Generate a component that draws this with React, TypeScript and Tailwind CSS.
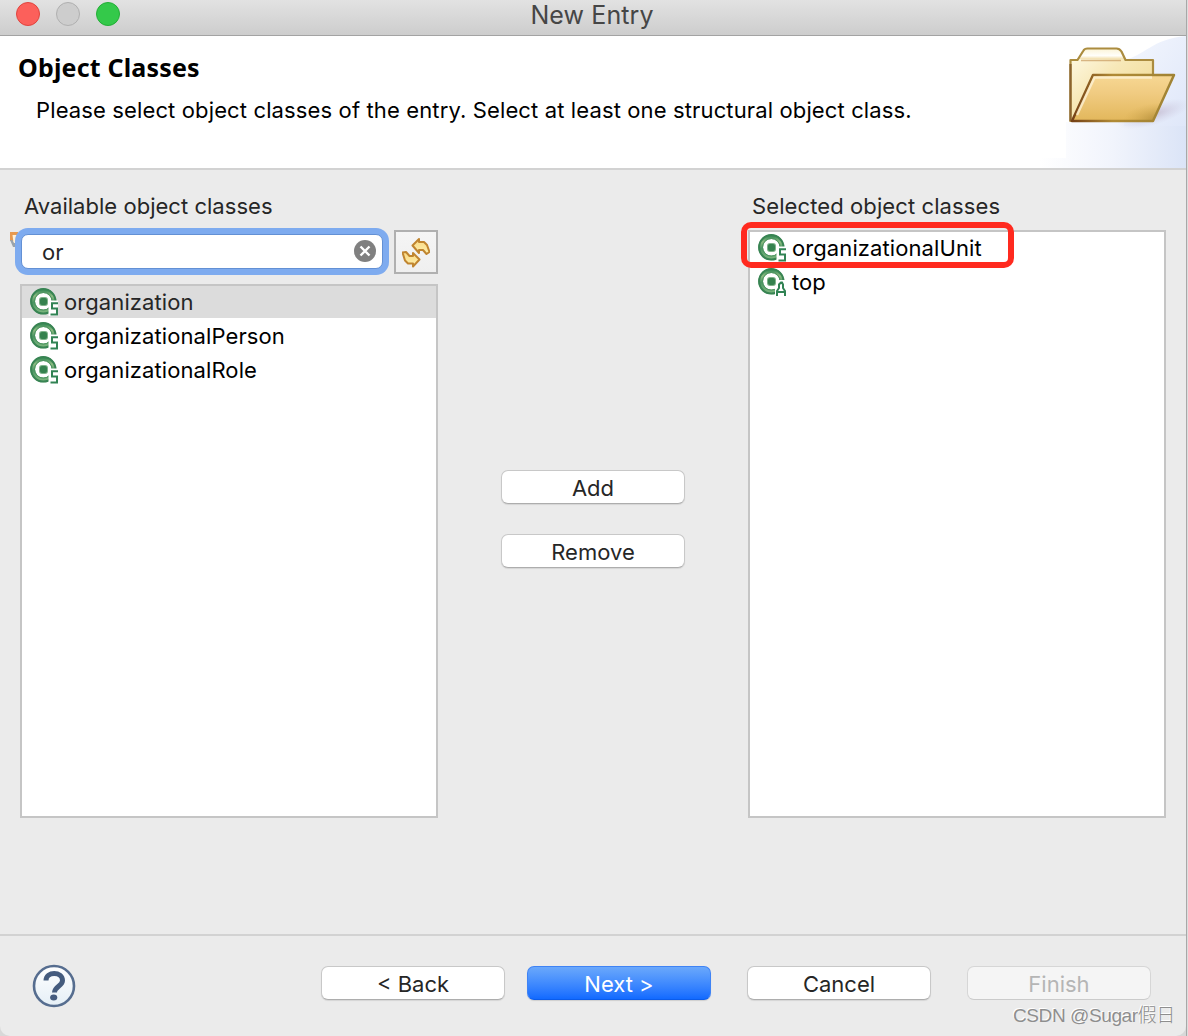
import type { ReactNode } from 'react';
import clsx from 'clsx';

type Kind = 'S' | 'A';

interface ObjectClass {
  name: string;
  kind: Kind;
}

const available: ObjectClass[] = [
  { name: 'organization', kind: 'S' },
  { name: 'organizationalPerson', kind: 'S' },
  { name: 'organizationalRole', kind: 'S' },
];

const selected: ObjectClass[] = [
  { name: 'organizationalUnit', kind: 'S' },
  { name: 'top', kind: 'A' },
];

function ClassIcon({ kind }: { kind: Kind }) {
  return (
    <svg width="28" height="28" viewBox="0 0 28 28" className="shrink-0">
      <defs>
        <linearGradient id="ring" x1="0" y1="0" x2="0" y2="1">
          <stop offset="0" stopColor="#3f8f5a" />
          <stop offset="0.25" stopColor="#8fbd82" />
          <stop offset="0.55" stopColor="#4b9562" />
          <stop offset="1" stopColor="#79b47c" />
        </linearGradient>
      </defs>
      <circle cx="13.300" cy="13.300" r="10.600" fill="#fff" stroke="url(#ring)" strokeWidth="4.600" />
      <circle cx="13.300" cy="13.300" r="12.200" fill="none" stroke="#388453" strokeWidth="2" />
      <circle cx="13.300" cy="13.300" r="8.800" fill="none" stroke="#4b9360" strokeWidth="1" />
      <rect x="9" y="9" width="9" height="9" rx="3" fill="#7fb38a" />
      <rect x="10" y="10" width="7" height="7" rx="2" fill="#35824e" />
      {kind === 'S' ? (
        <>
          <path d="M18.500 12.500H28V28h-9.500z" fill="#fff" />
          <path d="M28 15.200h-6v5.300h5v6h-6.500" fill="none" stroke="#318354" strokeWidth="2" />
        </>
      ) : (
        <>
          <path d="M20 12h8v16H17v-8z" fill="#fff" />
          <path
            d="M19 28v-5l2-3v-3.500l2-2h1l1 2V20l2 3v5M20 24h6"
            fill="none"
            stroke="#318354"
            strokeWidth="2"
          />
        </>
      )}
    </svg>
  );
}

function FolderArt() {
  return (
    <svg width="146" height="132" viewBox="0 0 146 132">
      <defs>
        <linearGradient id="haze" x1="0" x2="1">
          <stop offset="0" stopColor="#fff" />
          <stop offset="0.5" stopColor="#f1f4fc" />
          <stop offset="1" stopColor="#dbe4f7" />
        </linearGradient>
        <linearGradient id="beam" x1="0" x2="1" y1="0" y2="1">
          <stop offset="0" stopColor="#f4f7fe" />
          <stop offset="1" stopColor="#dfe7f9" />
        </linearGradient>
        <linearGradient id="back" x1="0" x2="1" y1="0" y2="1">
          <stop offset="0" stopColor="#fffbe8" />
          <stop offset="0.4" stopColor="#f7e8b8" />
          <stop offset="1" stopColor="#eed68a" />
        </linearGradient>
        <linearGradient id="tab" x1="0" x2="0" y1="0" y2="1">
          <stop offset="0" stopColor="#fbf3d3" />
          <stop offset="0.7" stopColor="#fffefa" />
          <stop offset="1" stopColor="#f2dfab" />
        </linearGradient>
        <linearGradient id="front" x1="0" x2="0" y1="0" y2="1">
          <stop offset="0" stopColor="#f7d894" />
          <stop offset="0.4" stopColor="#f0cb81" />
          <stop offset="1" stopColor="#e2b75b" />
        </linearGradient>
        <linearGradient id="edge" x1="0" x2="1">
          <stop offset="0" stopColor="#754116" />
          <stop offset="0.4" stopColor="#b08a35" />
          <stop offset="1" stopColor="#a08334" />
        </linearGradient>
        <radialGradient id="corner" cx="0.9" cy="1" r="0.4">
          <stop offset="0" stopColor="#8f6f24" stopOpacity="0.75" />
          <stop offset="1" stopColor="#c89f44" stopOpacity="0" />
        </radialGradient>
        <radialGradient id="shade">
          <stop offset="0" stopColor="#b5a5bd" stopOpacity="0.6" />
          <stop offset="1" stopColor="#c8c4dd" stopOpacity="0" />
        </radialGradient>
      </defs>
      <path d="M26 86H146V132H0V122H26z" fill="url(#haze)" />
      <path d="M84 24C104 20 112 3 146 0V90H84z" fill="url(#beam)" />
      <ellipse cx="114" cy="78" rx="38" ry="11" fill="url(#shade)" transform="rotate(-17 114 78)" />
      <path d="M30.500 86V24h7l6-10q1-2 4-2h29q3 0 5 3l4 9h28v62z" fill="url(#back)" />
      <path d="M37.500 23l6-9q1-2 4-2h29q3 0 5 3l4 8z" fill="url(#tab)" />
      <path
        d="M30.500 86V24h7l6-9.500q1-2 4-2h29q3 0 5 3l4 8.500h27.500v17"
        fill="none"
        stroke="#ab8c3f"
        strokeWidth="2.200"
        strokeLinejoin="round"
      />
      <path d="M41 24.500h40" stroke="#c99c61" strokeWidth="1.500" opacity="0.7" />
      <path d="M30.500 28v57" stroke="#8b632f" strokeWidth="2.200" />
      <path d="M32 85L53 39H134L113 85z" fill="url(#front)" />
      <path d="M32 85L53 39H134L113 85z" fill="url(#corner)" stroke="url(#edge)" strokeWidth="2.500" strokeLinejoin="round" />
      <path d="M37 79L54.500 41.500H112" fill="none" stroke="#fff6df" strokeWidth="2.500" opacity="0.7" />
    </svg>
  );
}

function RefreshArrows() {
  return (
    <svg width="28" height="31" viewBox="0 0 28 31" fill="url(#gold)" stroke="#c08530" strokeWidth="2" strokeLinejoin="round">
      <defs>
        <linearGradient id="gold" x1="0" x2="0" y1="0" y2="1">
          <stop offset="0" stopColor="#fbd983" />
          <stop offset="1" stopColor="#fdf0ae" />
        </linearGradient>
      </defs>
      <path d="M10.500 8.500L17 2v3h5l3 3 2.500 7-3 2-3.500-4h-4v3z" />
      <path d="M17.500 22.500L11 29.500v-3H6l-3-3-2.500-8 3.500-.5 3.500 4H11v-3z" />
    </svg>
  );
}

function ClassList({ items, className, active }: { items: ObjectClass[]; className?: string; active?: string }) {
  return (
    <ul className={clsx('w-[418px] border-2 border-[#c5c5c5] bg-white', className)}>
      {items.map((item) => (
        <li
          key={item.name}
          className={clsx(
            'mb-0.5 flex h-8 items-center gap-1.5 pl-2 tracking-[0.09px]',
            item.name === active ? 'bg-[#dcdcdc] text-[#262626]' : 'text-black',
          )}
        >
          <ClassIcon kind={item.kind} />
          <span>{item.name}</span>
        </li>
      ))}
    </ul>
  );
}

function Button({ children, variant = 'normal' }: { children: ReactNode; variant?: 'normal' | 'primary' | 'disabled' }) {
  return (
    <button
      disabled={variant === 'disabled'}
      className={clsx(
        'h-[34px] w-[184px] rounded-[7px] border pt-0.5 text-center leading-[30px]',
        variant === 'normal' && 'border-[#c8c8c8] border-b-[#adadad] bg-white text-[#262626] shadow-[0_1px_1px_#00000018]',
        variant === 'primary' && 'border-[#3f83f5] border-b-[#0b5ceb] bg-linear-to-b from-[#6aa8fb] to-[#116aff] text-white shadow-[0_1px_1px_#00000020]',
        variant === 'disabled' && 'border-[#d6d6d6] border-b-[#cbcbcb] bg-[#f5f5f5] text-[#b5b5b5]',
      )}
    >
      {children}
    </button>
  );
}

export default function App() {
  return (
    <div className="flex h-[1036px] w-[1188px] overflow-hidden bg-[#d8d8d8] font-['Inter',sans-serif] text-[22px] leading-7 text-[#262626]">
      <div className="relative flex w-[1186px] flex-col rounded-b-[10px] bg-[#ebebeb]">
        {/* Title bar */}
        <div className="relative flex h-9 shrink-0 justify-center border-b border-[#a3a3a3] bg-linear-to-b from-[#e2e2e2] to-[#cdcdcd]">
          <div className="absolute left-4 top-0.5 flex gap-4">
            <span className="size-6 rounded-full border border-[#e0443e] bg-[#fc605b]" />
            <span className="size-6 rounded-full border border-[#b0b0b0] bg-[#cdcdcd]" />
            <span className="size-6 rounded-full border border-[#23ae36] bg-[#34c94a]" />
          </div>
          <h1 className="pr-0.5 pt-px text-[25px] tracking-[0.1px] text-[#464646]">New Entry</h1>
        </div>

        {/* Wizard banner */}
        <div className="flex h-[134px] shrink-0 justify-between border-b-2 border-[#d2d2d2] bg-white text-black">
          <div className="pl-[18px] pt-[17px]">
            <h2 className="font-['Noto_Sans',sans-serif] text-[25px] font-bold tracking-[0.18px]">Object Classes</h2>
            <p className="ml-[18px] mt-[15px] whitespace-nowrap tracking-[0.13px]">
              Please select object classes of the entry. Select at least one structural object class.
            </p>
          </div>
          <FolderArt />
        </div>

        {/* Object class pickers */}
        <div className="flex h-[766px] shrink-0 justify-between border-b-2 border-[#d2d2d2] pl-5 pr-5 pt-[22px]">
          <div className="w-[418px]">
            <div className="pl-1 tracking-[0.03px]">Available object classes</div>
            <div className="relative mt-[10px] flex h-11 items-center justify-between">
              <svg width="8" height="17" viewBox="0 0 8 17" className="absolute -left-2.5 top-0.5">
                <path d="M0 0h8v9H0z" fill="#e79a50" />
                <path d="M2.500 3h5v8h-4z" fill="#fff1d8" />
                <path d="M0 8l3 7h5v-4H4L2.500 8z" fill="#9aa3ab" />
              </svg>
              <div className="relative -top-px ml-px flex h-[35px] w-[362px] items-center justify-between rounded-[7px] border border-[#6390d4] bg-white pl-5 pr-1.5 shadow-[0_0_0_6px_#7eabef]">
                <span className="pt-0.5">or</span>
                <svg width="22" height="22" viewBox="0 0 22 22">
                  <circle cx="11" cy="11" r="11" fill="#808080" />
                  <path d="M6.500 6.500l9 9m0-9l-9 9" stroke="#fff" strokeWidth="2.400" />
                </svg>
              </div>
              <button className="flex size-11 items-center justify-center border-2 border-[#b0b0b0] bg-linear-to-b from-[#f5f5f5] to-[#efefef]">
                <RefreshArrows />
              </button>
            </div>
            <ClassList items={available} active="organization" className="mt-[10px] h-[534px]" />
          </div>

          <div className="mt-[278px] flex flex-col gap-[30px]">
            <Button>Add</Button>
            <Button>Remove</Button>
          </div>

          <div className="relative w-[418px]">
            <div className="pl-1 tracking-[0.1px]">Selected object classes</div>
            <ClassList items={selected} className="mt-[10px] h-[588px]" />
            <div className="absolute -left-[7px] top-[30px] h-[46px] w-[273px] rounded-[10px] border-[6px] border-[#ff2a1f]" />
          </div>
        </div>

        {/* Footer */}
        <div className="flex grow items-start justify-between pl-8 pr-[35px] pt-[30px]">
          <svg width="44" height="44" viewBox="0 0 44 44" className="-mt-0.5">
            <defs>
              <linearGradient id="help" x1="0" y1="0" x2="0" y2="1">
                <stop offset="0" stopColor="#fff" />
                <stop offset="1" stopColor="#e5eff6" />
              </linearGradient>
            </defs>
            <circle cx="22" cy="22" r="20" fill="url(#help)" stroke="#566d8f" strokeWidth="2.600" />
            <path d="M14 16.500c0-9.500 16.500-9.500 16.500 0 0 5.500-8 6-8 12" fill="none" stroke="#455c7e" strokeWidth="5" />
            <ellipse cx="21.700" cy="33.500" rx="3.600" ry="2.900" fill="#455c7e" />
          </svg>
          <div className="flex">
            <Button>&lt; Back</Button>
            <div className="ml-[22px]">
              <Button variant="primary">Next &gt;</Button>
            </div>
            <div className="ml-9">
              <Button>Cancel</Button>
            </div>
            <div className="ml-9">
              <Button variant="disabled">Finish</Button>
            </div>
          </div>
        </div>
        <div className="absolute bottom-1 right-3 flex w-[161px] whitespace-nowrap font-['Liberation_Sans','Noto_Sans_CJK_SC',sans-serif] text-[19px] font-light leading-8 tracking-[-0.4px] text-[#8e8e8e] [text-shadow:-1px_-1px_0_#fff]">
          CSDN @Sugar假日
        </div>
      </div>
      <div className="w-0.5 border-l border-[#a8a8a8] bg-[#dedede]" />
    </div>
  );
}
